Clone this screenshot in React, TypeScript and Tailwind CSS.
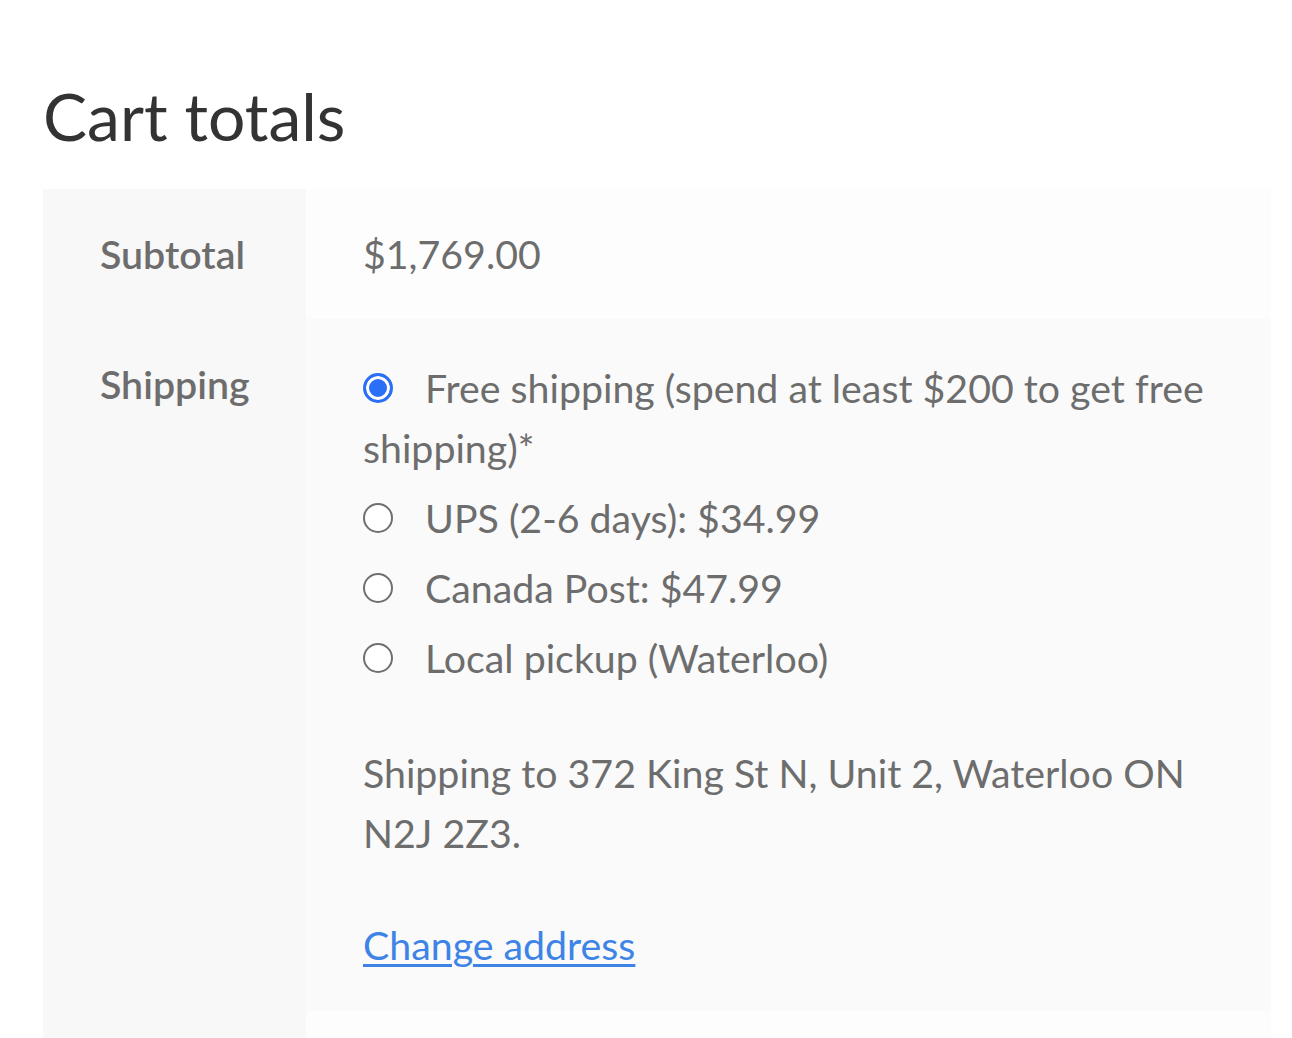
import React from 'react';

const font = { fontFamily: 'Lato, "Noto Sans", sans-serif' };

function Radio({ checked }: { checked?: boolean }) {
    return checked ? (
        <span className="inline-block h-[30px] w-[30px] shrink-0 rounded-full border-[3px] border-[#2a6ff5] bg-[#2a6ff5] align-baseline shadow-[inset_0_0_0_3px_#ffffff]" />
    ) : (
        <span className="inline-block h-[30px] w-[30px] shrink-0 rounded-full border-2 border-[#6f6f6f] bg-white align-baseline" />
    );
}

const methods = [
    { label: 'Free shipping (spend at least $200 to get free shipping)*', checked: true },
    { label: 'UPS (2-6 days): $34.99' },
    { label: 'Canada Post: $47.99' },
    { label: 'Local pickup (Waterloo)' },
];

export default function App() {
    return (
        <div className="h-[1038px] overflow-hidden bg-white pl-[43px] pr-[21px]" style={font}>
            <h2 className="pt-[76px] text-[66px] leading-[1.2] font-normal text-[#333333]">Cart totals</h2>

            <div className="mt-[34px] text-[39.3px] leading-[60px] text-[#6d6d6d]">
                {/* subtotal */}
                <div className="flex">
                    <div className="w-[263px] shrink-0 bg-[#f8f8f8] py-[35px] pl-[57px] font-semibold">Subtotal</div>
                    <div className="flex-1 bg-[#fdfdfd] py-[35px] pl-[57px]">$1,769.00</div>
                </div>

                {/* shipping */}
                <div className="flex">
                    <div className="w-[263px] shrink-0 bg-[#f8f8f8] pt-[35px] pl-[57px] font-semibold">Shipping</div>
                    <div className="flex-1 bg-[#fafafa] pt-[39px] pb-[36px] pl-[57px] pr-[40px]">
                        <ul className="flex flex-col gap-[10px]">
                            {methods.map((m) => (
                                <li key={m.label}>
                                    <span className="mr-[32px]">
                                        <Radio checked={m.checked} />
                                    </span>
                                    {m.label}
                                </li>
                            ))}
                        </ul>
                        <p className="mt-[55px] pr-[17px]">Shipping to 372 King St N, Unit 2, Waterloo ON N2J 2Z3.</p>
                        <a href="#" className="mt-[52px] block w-fit text-[#3d84e6] underline decoration-[3px] underline-offset-[4px]">
                            Change address
                        </a>
                    </div>
                </div>

                {/* next row, cut off by the window */}
                <div className="flex h-[130px]">
                    <div className="w-[263px] shrink-0 bg-[#f8f8f8]" />
                    <div className="flex-1 bg-[#fdfdfd]" />
                </div>
            </div>
        </div>
    );
}
